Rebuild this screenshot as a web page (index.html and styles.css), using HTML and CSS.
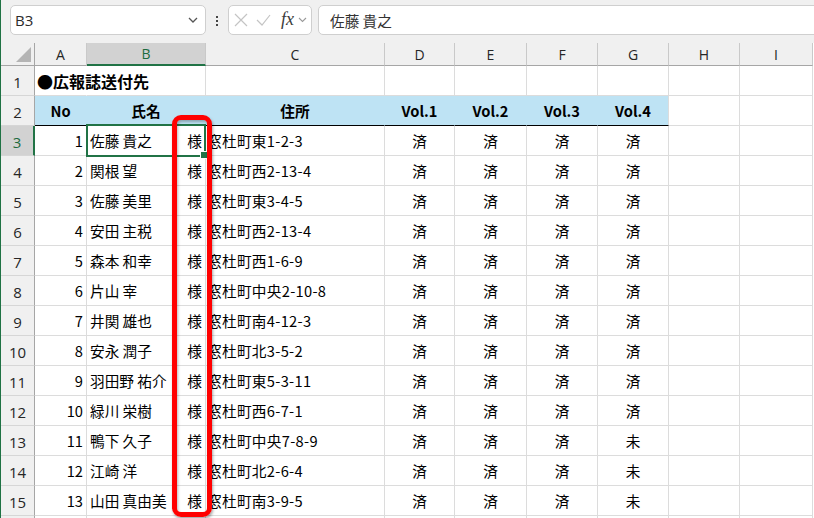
FILE: index.html
```html
<!DOCTYPE html>
<html lang="ja">
<head>
<meta charset="utf-8">
<title>広報誌送付先</title>
<link rel="stylesheet" href="styles.css">
</head>
<body>
<div class="app">
  <div class="toolbar">
    <div class="namebox"><span>B3</span><svg class="chev" width="10" height="6" viewBox="0 0 10 6"><path d="M1 1l4 4 4-4" /></svg></div>
    <svg class="dots" width="22" height="30" viewBox="0 0 22 30"><rect x="10" y="11" width="2" height="2"/><rect x="10" y="15" width="2" height="2"/><rect x="10" y="19" width="2" height="2"/></svg>
    <div class="fxbox">
      <svg class="ico" width="14" height="14" viewBox="0 0 14 14"><path d="M1 1l12 12M13 1L1 13"/></svg>
      <svg class="ico chk" width="15" height="14" viewBox="0 0 15 14"><path d="M1 7l5 5 8-10"/></svg>
      <span class="fx">fx</span>
      <svg class="chev small" width="9" height="6" viewBox="0 0 9 6"><path d="M1 1l3.5 3.5L8 1"/></svg>
    </div>
    <div class="formula">佐藤 貴之</div>
  </div>

  <div class="sheet">
    <div class="h corner"></div><div class="h">A</div><div class="h on">B</div><div class="h">C</div><div class="h">D</div><div class="h">E</div><div class="h">F</div><div class="h">G</div><div class="h">H</div><div class="h">I</div>

    <div class="r">1</div><div class="c open title">●広報誌送付先</div><div class="c"></div><div class="c"></div><div class="c"></div><div class="c"></div><div class="c"></div><div class="c"></div><div class="c"></div><div class="c"></div>

    <div class="r">2</div><div class="c hd">No</div><div class="c hd">氏名</div><div class="c hd">住所</div><div class="c hd">Vol.1</div><div class="c hd">Vol.2</div><div class="c hd">Vol.3</div><div class="c hd last">Vol.4</div><div class="c"></div><div class="c"></div>

    <div class="r on">3</div><div class="c num">1</div><div class="c nm sel"><span>佐藤 貴之</span><span>様</span></div><div class="c ad">窓杜町東1-2-3</div><div class="c ctr">済</div><div class="c ctr">済</div><div class="c ctr">済</div><div class="c ctr">済</div><div class="c"></div><div class="c"></div>

    <div class="r">4</div><div class="c num">2</div><div class="c nm"><span>関根 望</span><span>様</span></div><div class="c ad">窓杜町西2-13-4</div><div class="c ctr">済</div><div class="c ctr">済</div><div class="c ctr">済</div><div class="c ctr">済</div><div class="c"></div><div class="c"></div>

    <div class="r">5</div><div class="c num">3</div><div class="c nm"><span>佐藤 美里</span><span>様</span></div><div class="c ad">窓杜町東3-4-5</div><div class="c ctr">済</div><div class="c ctr">済</div><div class="c ctr">済</div><div class="c ctr">済</div><div class="c"></div><div class="c"></div>

    <div class="r">6</div><div class="c num">4</div><div class="c nm"><span>安田 主税</span><span>様</span></div><div class="c ad">窓杜町西2-13-4</div><div class="c ctr">済</div><div class="c ctr">済</div><div class="c ctr">済</div><div class="c ctr">済</div><div class="c"></div><div class="c"></div>

    <div class="r">7</div><div class="c num">5</div><div class="c nm"><span>森本 和幸</span><span>様</span></div><div class="c ad">窓杜町西1-6-9</div><div class="c ctr">済</div><div class="c ctr">済</div><div class="c ctr">済</div><div class="c ctr">済</div><div class="c"></div><div class="c"></div>

    <div class="r">8</div><div class="c num">6</div><div class="c nm"><span>片山 宰</span><span>様</span></div><div class="c ad">窓杜町中央2-10-8</div><div class="c ctr">済</div><div class="c ctr">済</div><div class="c ctr">済</div><div class="c ctr">済</div><div class="c"></div><div class="c"></div>

    <div class="r">9</div><div class="c num">7</div><div class="c nm"><span>井関 雄也</span><span>様</span></div><div class="c ad">窓杜町南4-12-3</div><div class="c ctr">済</div><div class="c ctr">済</div><div class="c ctr">済</div><div class="c ctr">済</div><div class="c"></div><div class="c"></div>

    <div class="r">10</div><div class="c num">8</div><div class="c nm"><span>安永 潤子</span><span>様</span></div><div class="c ad">窓杜町北3-5-2</div><div class="c ctr">済</div><div class="c ctr">済</div><div class="c ctr">済</div><div class="c ctr">済</div><div class="c"></div><div class="c"></div>

    <div class="r">11</div><div class="c num">9</div><div class="c nm"><span>羽田野 祐介</span><span>様</span></div><div class="c ad">窓杜町東5-3-11</div><div class="c ctr">済</div><div class="c ctr">済</div><div class="c ctr">済</div><div class="c ctr">済</div><div class="c"></div><div class="c"></div>

    <div class="r">12</div><div class="c num">10</div><div class="c nm"><span>緑川 栄樹</span><span>様</span></div><div class="c ad">窓杜町西6-7-1</div><div class="c ctr">済</div><div class="c ctr">済</div><div class="c ctr">済</div><div class="c ctr">済</div><div class="c"></div><div class="c"></div>

    <div class="r">13</div><div class="c num">11</div><div class="c nm"><span>鴨下 久子</span><span>様</span></div><div class="c ad">窓杜町中央7-8-9</div><div class="c ctr">済</div><div class="c ctr">済</div><div class="c ctr">済</div><div class="c ctr">未</div><div class="c"></div><div class="c"></div>

    <div class="r">14</div><div class="c num">12</div><div class="c nm"><span>江崎 洋</span><span>様</span></div><div class="c ad">窓杜町北2-6-4</div><div class="c ctr">済</div><div class="c ctr">済</div><div class="c ctr">済</div><div class="c ctr">未</div><div class="c"></div><div class="c"></div>

    <div class="r">15</div><div class="c num">13</div><div class="c nm"><span>山田 真由美</span><span>様</span></div><div class="c ad">窓杜町南3-9-5</div><div class="c ctr">済</div><div class="c ctr">済</div><div class="c ctr">済</div><div class="c ctr">未</div><div class="c"></div><div class="c"></div>

    <div class="r"></div><div class="c"></div><div class="c"></div><div class="c"></div><div class="c"></div><div class="c"></div><div class="c"></div><div class="c"></div><div class="c"></div><div class="c"></div>
  </div>

  <div class="mark"></div>
</div>
</body>
</html>
```

FILE: styles.css
```css
* { box-sizing: border-box; margin: 0; padding: 0; }

html, body {
  width: 814px;
  height: 518px;
  overflow: hidden;
  background: #fff;
}

body {
  font-family: "Noto Sans CJK JP", "Noto Sans", sans-serif;
  font-size: 14.67px;
  color: #000;
}

.app {
  position: relative;
  height: 518px;
  border-left: 1px solid #1f7244;
  background: #fff;
  overflow: hidden;
}

/* ---------- formula bar ---------- */
.toolbar {
  display: flex;
  align-items: flex-start;
  height: 43px;
  padding: 5px 0 0 9px;
  background: #f0f0f0;
}

.namebox {
  width: 196px;
  height: 30px;
  flex: none;
  display: flex;
  align-items: center;
  justify-content: space-between;
  padding: 0 7px 0 4px;
  background: #fff;
  border: 1px solid #cfcfcf;
  border-radius: 5px;
  font-family: "Open Sans", "Noto Sans", sans-serif;
  font-size: 15px;
  color: #2b2b2b;
}

.chev path {
  fill: none;
  stroke: #555;
  stroke-width: 1.3;
}

.dots {
  flex: none;
  fill: #444;
}

.fxbox {
  width: 84px;
  height: 30px;
  flex: none;
  display: flex;
  align-items: center;
  padding-left: 5px;
  background: #fff;
  border: 1px solid #cfcfcf;
  border-radius: 5px;
}

.ico path {
  fill: none;
  stroke: #c4c4c4;
  stroke-width: 1.2;
}

.chk { margin-left: 8px; }

.fx {
  margin-left: 10px;
  font-family: "Liberation Serif", serif;
  font-style: italic;
  font-size: 18px;
  color: #3a3a3a;
  line-height: 1;
  padding-bottom: 2px;
}

.chev.small { margin-left: 4px; }
.chev.small path { stroke: #9a9a9a; stroke-width: 1.1; }

.formula {
  flex: 1;
  height: 30px;
  margin-left: 6px;
  margin-right: -12px;
  display: flex;
  align-items: center;
  padding-left: 11px;
  background: #fff;
  border: 1px solid #cfcfcf;
  border-radius: 5px;
  color: #333;
}

/* ---------- sheet ---------- */
.sheet {
  display: grid;
  grid-template-columns: 34px 52px 119px 179px 70px 72px 71px 71px 71px 73px;
  grid-template-rows: 23px;
  grid-auto-rows: 30px;
}

.h {
  display: flex;
  align-items: center;
  justify-content: center;
  background: #f0f0f0;
  border-right: 1px solid #c9c9c9;
  border-bottom: 1px solid #a6a6a6;
  font-family: "Open Sans", "Noto Sans", sans-serif;
  font-size: 14px;
  color: #262626;
}

.h.on {
  background: #d2d2d2;
  color: #1d6b3e;
  border-bottom: 2px solid #217346;
}

.corner {
  position: relative;
  border-right-color: #a6a6a6;
}

.corner::after {
  content: "";
  position: absolute;
  right: 3px;
  bottom: 3px;
  width: 0;
  height: 0;
  border-left: 15px solid transparent;
  border-bottom: 15px solid #b4b4b4;
}

.r {
  display: flex;
  align-items: center;
  justify-content: center;
  padding-top: 2px;
  background: #f0f0f0;
  border-right: 1px solid #a6a6a6;
  border-bottom: 1px solid #d6d6d6;
  font-family: "Open Sans", "Noto Sans", sans-serif;
  font-size: 15px;
  color: #262626;
}

.r.on {
  background: #d2d2d2;
  color: #1d6b3e;
  border-right: 2px solid #217346;
}

.c {
  display: flex;
  align-items: center;
  padding: 0 3px;
  white-space: nowrap;
  border-right: 1px solid #dcdcdc;
  border-bottom: 1px solid #dcdcdc;
}

.c.open { border-right-color: transparent; }

.title {
  font-weight: 700;
  font-size: 16px;
  padding-left: 2px;
}

.hd {
  justify-content: center;
  background: #bee3f4;
  border-right-color: #bee3f4;
  border-bottom-color: #000;
  font-weight: 700;
}

.hd.last { border-right-color: #dcdcdc; }

.num { justify-content: flex-end; }
.nm { justify-content: space-between; }
.ad { padding-left: 1px; letter-spacing: 0.3px; }
.ctr { justify-content: center; }

.sel {
  position: relative;
  z-index: 1;
}

.sel::before {
  content: "";
  position: absolute;
  top: -2px;
  left: -1px;
  right: -1px;
  bottom: -2px;
  border: 2px solid #217346;
}

.sel::after {
  content: "";
  position: absolute;
  right: -3px;
  bottom: -4px;
  width: 6px;
  height: 6px;
  background: #217346;
  border: 1px solid #fff;
}

/* ---------- red highlight ---------- */
.mark {
  position: absolute;
  left: 171px;
  top: 115px;
  width: 40px;
  height: 402px;
  border: 5.5px solid #ff0000;
  border-radius: 9px;
  box-shadow: 1px 2px 3px rgba(0, 0, 0, 0.35), inset 1px 2px 3px rgba(0, 0, 0, 0.28);
  z-index: 2;
}
```
